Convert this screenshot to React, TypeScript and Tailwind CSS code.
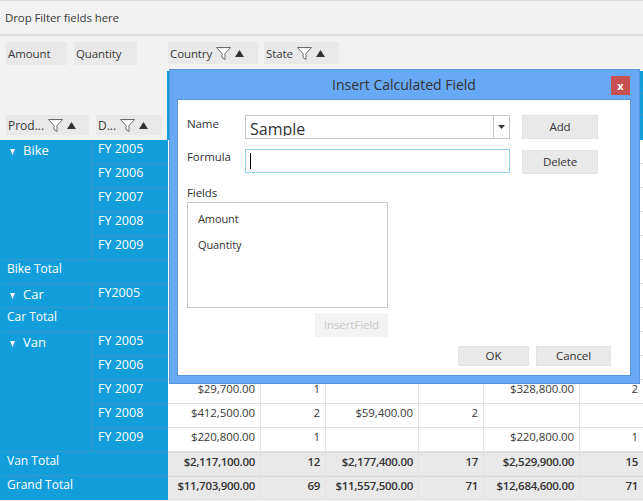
import React from 'react';

const FONT = "font-['Open_Sans','Noto_Sans',sans-serif]";

const groups = [
  { name: 'Bike', years: ['FY 2005', 'FY 2006', 'FY 2007', 'FY 2008', 'FY 2009'] },
  { name: 'Car', years: ['FY2005'] },
  { name: 'Van', years: ['FY 2005', 'FY 2006', 'FY 2007', 'FY 2008', 'FY 2009'] },
];

const colWidths = ['w-[93px]', 'w-[65px]', 'w-[93px]', 'w-[65px]', 'w-[96px]', 'w-[63px]'];

const emptyRow = ['', '', '', '', '', ''];
const rows = [
  ...Array.from({ length: 10 }, () => ({ cells: emptyRow, total: false })),
  { cells: ['$29,700.00', '1', '', '', '$328,800.00', '2'], total: false },
  { cells: ['$412,500.00', '2', '$59,400.00', '2', '', ''], total: false },
  { cells: ['$220,800.00', '1', '', '', '$220,800.00', '1'], total: false },
  { cells: ['$2,117,100.00', '12', '$2,177,400.00', '17', '$2,529,900.00', '15'], total: true },
  { cells: ['$11,703,900.00', '69', '$11,557,500.00', '71', '$12,684,600.00', '71'], total: true },
];

const FilterIcon = () => (
  <svg width="15" height="13" viewBox="0 0 15 13" className="shrink-0">
    <path d="M.5 .5h14L9 6.500V12.500L6 10.500v-4z" fill="#fff" stroke="#6a6a6a" strokeWidth="1" />
  </svg>
);

const SortIcon = () => (
  <svg width="9" height="7" viewBox="0 0 9 7" className="shrink-0">
    <path d="M4.500 0L9 7H0z" fill="#333" />
  </svg>
);

const Chip = ({ label, width, filter }: { label: string; width: string; filter?: boolean }) => (
  <div className={`flex items-center h-full bg-[#e9e9e9] pl-[2px] ${width}`}>
    <span className="mr-[4px] pt-[1px]">{label}</span>
    {filter && (
      <span className="flex items-center gap-[4px]">
        <FilterIcon />
        <SortIcon />
      </span>
    )}
  </div>
);

const DialogButton = ({ label, className }: { label: string; className: string }) => (
  <button className={`flex items-center justify-center bg-[#e9e9e9] border border-[#e2e2e2] text-[#333] ${className}`}>
    {label}
  </button>
);

const InsertCalculatedField = () => (
  <div className="absolute left-[169px] top-[69px] w-[471px] h-[315px] flex flex-col bg-[#68a9f6] border border-[#5a96dc] pl-[7px] pr-[8px] pb-[7px]">
    <div className="relative flex items-center justify-center h-[29px] shrink-0 text-[14px] tracking-normal text-[#333]">
      Insert Calculated Field
      <div className="absolute right-[1px] top-[6px] flex items-center justify-center w-[19px] h-[19px] bg-[#c75050] text-white text-[11px] font-bold leading-none">
        x
      </div>
    </div>
    <div className="flex-1 flex flex-col bg-white border border-[#5a96dc] pl-[9px] pr-[19px] pt-[15px]">
      <div className="flex">
        <span className="w-[58px] pt-[1px] text-[#333]">Name</span>
        <div className="flex w-[265px] h-[24px] border border-[#c8c8c8]">
          <div className="flex-1 h-[20px] overflow-hidden pl-[4px] text-[16px] tracking-normal leading-[27px] text-[#333]">Sample</div>
          <div className="flex items-center justify-center w-[16px] border-l border-[#c8c8c8]">
            <svg width="7" height="4" viewBox="0 0 7 4">
              <path d="M0 0h7L3.500 4z" fill="#333" />
            </svg>
          </div>
        </div>
        <DialogButton label="Add" className="ml-[12px] w-[76px] h-[24px]" />
      </div>
      <div className="flex mt-[10px]">
        <span className="w-[58px] text-[#333]">Formula</span>
        <div className="flex items-center w-[265px] h-[24px] border border-[#8fd3f0] pl-[4px]">
          <div className="w-[1px] h-[16px] bg-black" />
        </div>
        <DialogButton label="Delete" className="ml-[12px] w-[76px] h-[24px] mt-[1px]" />
      </div>
      <div className="mt-[11px] text-[#333]">Fields</div>
      <div className="flex flex-col w-[201px] h-[106px] mt-[1px] border border-[#c8c8c8] pl-[10px] pt-[8px] gap-[10px] text-[11px] text-[#333]">
        <span>Amount</span>
        <span>Quantity</span>
      </div>
      <div className="flex justify-end w-[201px] mt-[5px]">
        <div className="flex items-center justify-center w-[73px] h-[24px] bg-[#f3f3f3] text-[#c9c9c9]">InsertField</div>
      </div>
      <div className="flex justify-end gap-[7px] mt-[9px]">
        <DialogButton label="OK" className="w-[71px] h-[20px]" />
        <DialogButton label="Cancel" className="w-[75px] h-[20px]" />
      </div>
    </div>
  </div>
);

const App = () => {
  return (
    <div className={`relative w-[643px] h-[501px] overflow-hidden bg-[#f2f2f2] text-[11.5px] tracking-[-0.1px] leading-[16px] text-[#3a3a3a] ${FONT}`}>
      <div className="flex items-center h-[36px] pl-[5px] border-t border-b-2 border-[#dedede]">Drop Filter fields here</div>

      <div className="flex h-[35px] pt-[6px] pb-[6px]">
        <div className="flex h-[23px] ml-[6px] gap-[7px] w-[162px]">
          <Chip label="Amount" width="w-[61px]" />
          <Chip label="Quantity" width="w-[63px]" />
        </div>
        <div className="flex h-[22px] gap-[6px]">
          <Chip label="Country" width="w-[90px]" filter />
          <Chip label="State" width="w-[75px]" filter />
        </div>
      </div>

      <div className="flex h-[69px]">
        <div className="flex items-end w-[167px] pb-[5px] pl-[6px] gap-[7px] text-[12px] tracking-normal">
          <div className="h-[20px]">
            <Chip label="Prod..." width="w-[83px]" filter />
          </div>
          <div className="h-[20px]">
            <Chip label="D..." width="w-[66px]" filter />
          </div>
        </div>
        <div className="flex-1 flex flex-col bg-[#119eda]">
          <div className="h-[23px] border-b border-[#3a97c6]" />
          <div className="h-[21px] border-b border-[#3a97c6]" />
        </div>
      </div>

      <div className="flex">
        <div className="w-[168px] pl-[1px] bg-[#119eda] text-[12px] tracking-normal text-white shrink-0">
          {groups.map((group) => (
            <div key={group.name}>
              <div className="flex">
                <div className="flex w-[91px] pl-[9px] pt-[2px] text-[13px] border-r border-b border-[#3a97c6]">
                  <svg width="5" height="6" viewBox="0 0 5 6" className="mt-[7px] mr-[8px]">
                    <path d="M0 0h5L2.500 6z" fill="#fff" />
                  </svg>
                  {group.name}
                </div>
                <div className="flex-1 text-[12.5px]">
                  {group.years.map((year) => (
                    <div key={year} className="h-[24px] pl-[6px] pt-[1px] border-b border-[#3a97c6]">
                      {year}
                    </div>
                  ))}
                </div>
              </div>
              <div className="h-[24px] pl-[6px] pt-[1px] border-b border-[#3a97c6]">{group.name} Total</div>
            </div>
          ))}
          <div className="h-[24px] pl-[6px] pt-[1px]">Grand Total</div>
        </div>
        <div className="flex-1">
          {rows.map((row, i) => (
            <div key={i} className={`flex h-[24px] ${row.total ? 'bg-[#e9e9e9] font-semibold tracking-[-0.3px] text-[#333]' : 'bg-white'}`}>
              {row.cells.map((cell, j) => (
                <div key={j} className={`pr-[5px] pt-[1px] text-right border-b border-r border-[#e2e2e2] last:border-r-0 ${colWidths[j]} ${row.total ? 'border-t border-t-[#d9d9d9]' : ''}`}>
                  {cell}
                </div>
              ))}
            </div>
          ))}
        </div>
      </div>

      <InsertCalculatedField />
    </div>
  );
};

export default App;
